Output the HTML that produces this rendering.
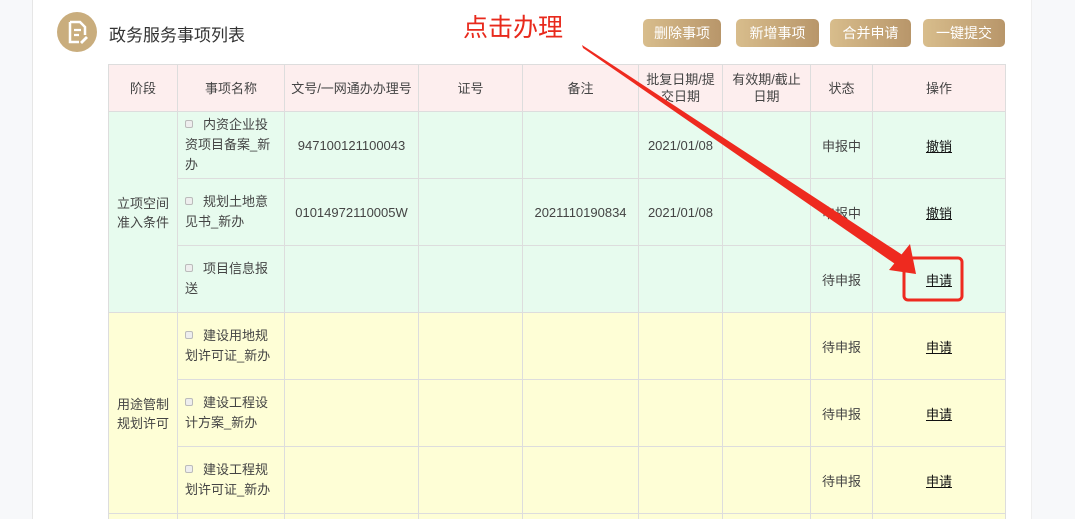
<!DOCTYPE html>
<html style="overflow:hidden;width:1075px;height:519px"><head><meta charset="utf-8"><style>
*{margin:0;padding:0;box-sizing:border-box}
body{width:1075px;height:519px;overflow:hidden;background:#f7f8fa;font-family:"Liberation Sans","Noto Sans CJK SC",sans-serif;position:relative;color:#333}
.main{position:absolute;left:32px;top:0;width:1000px;height:519px;background:#fff;border-left:1px solid #e6e6e6;border-right:1px solid #eee}
.icon{position:absolute;left:57px;top:12px;width:40px;height:40px;border-radius:50%;background:#c9ad7d}
.title{position:absolute;left:109px;top:21px;font-size:17px;color:#333}
.btn{position:absolute;top:19px;height:28px;border-radius:5px;background:linear-gradient(90deg,#d8bd8c,#b8966a);color:#fff;font-size:14px;line-height:28px;text-align:center}
table{position:absolute;left:108px;top:64px;border-collapse:collapse;table-layout:fixed;font-size:13px}
td,th{border:1px solid #ddd;text-align:center;font-weight:normal;color:#444;padding:0 6px}
th{background:#fdeeee;height:47px;line-height:17px}
tr.g td{background:#e7fbee;height:67px}
tr.y td{background:#fefed6;height:67px}
tr.y.last td{height:5px;border-bottom:none}
td.n{text-align:left;line-height:20px;padding:0 6px 0 7px}
.cb{display:inline-block;width:8px;height:8px;border:1px solid #bbb;border-radius:2px;background:#eee;margin:0 10px 0 0;vertical-align:1px}
u{color:#111}
.red{position:absolute;left:463px;top:8px;font-size:25px;color:#e8291c}
</style></head><body>
<div class="main"></div>
<div class="icon"><svg width="40" height="40" viewBox="0 0 40 40"><path d="M13 10h10l5 5v8" fill="none" stroke="#fff" stroke-width="2.5"/><path d="M13 10v20h9" fill="none" stroke="#fff" stroke-width="2.5"/><path d="M17 18h7M17 23h5" stroke="#fff" stroke-width="2.2"/><path d="M23 30l6-6 2 2-6 6z" fill="#fff"/></svg></div>
<div class="title">政务服务事项列表</div>
<div class="red">点击办理</div>
<div class="btn" style="left:643px;width:78px">删除事项</div>
<div class="btn" style="left:736px;width:83px">新增事项</div>
<div class="btn" style="left:830px;width:81px">合并申请</div>
<div class="btn" style="left:923px;width:82px">一键提交</div>
<table>
<colgroup><col style="width:69px"><col style="width:107px"><col style="width:134px"><col style="width:104px"><col style="width:116px"><col style="width:84px"><col style="width:88px"><col style="width:62px"><col style="width:133px"></colgroup>
<tr><th>阶段</th><th>事项名称</th><th>文号/一网通办办理号</th><th>证号</th><th>备注</th><th>批复日期/提交日期</th><th>有效期/截止日期</th><th>状态</th><th>操作</th></tr>
<tr class="g"><td rowspan="3">立项空间准入条件</td><td class="n"><span class="cb"></span>内资企业投资项目备案_新办</td><td>947100121100043</td><td></td><td></td><td>2021/01/08</td><td></td><td>申报中</td><td><u>撤销</u></td></tr>
<tr class="g"><td class="n"><span class="cb"></span>规划土地意见书_新办</td><td>01014972110005W</td><td></td><td>2021110190834</td><td>2021/01/08</td><td></td><td>申报中</td><td><u>撤销</u></td></tr>
<tr class="g"><td class="n"><span class="cb"></span>项目信息报送</td><td></td><td></td><td></td><td></td><td></td><td>待申报</td><td><u>申请</u></td></tr>
<tr class="y"><td rowspan="3">用途管制规划许可</td><td class="n"><span class="cb"></span>建设用地规划许可证_新办</td><td></td><td></td><td></td><td></td><td></td><td>待申报</td><td><u>申请</u></td></tr>
<tr class="y"><td class="n"><span class="cb"></span>建设工程设计方案_新办</td><td></td><td></td><td></td><td></td><td></td><td>待申报</td><td><u>申请</u></td></tr>
<tr class="y"><td class="n"><span class="cb"></span>建设工程规划许可证_新办</td><td></td><td></td><td></td><td></td><td></td><td>待申报</td><td><u>申请</u></td></tr>
<tr class="y last"><td></td><td></td><td></td><td></td><td></td><td></td><td></td><td></td><td></td></tr>
</table>
<svg style="position:absolute;left:0;top:0" width="1075" height="519">
<polygon points="582,45 583,48 898,266 904,256" fill="#ee2a1f"/>
<polygon points="916,274 889,270 910,244" fill="#ee2a1f"/>
<rect x="904" y="258" width="58" height="42" rx="4" fill="none" stroke="#ee2a1f" stroke-width="3"/>
</svg>
</body></html>
